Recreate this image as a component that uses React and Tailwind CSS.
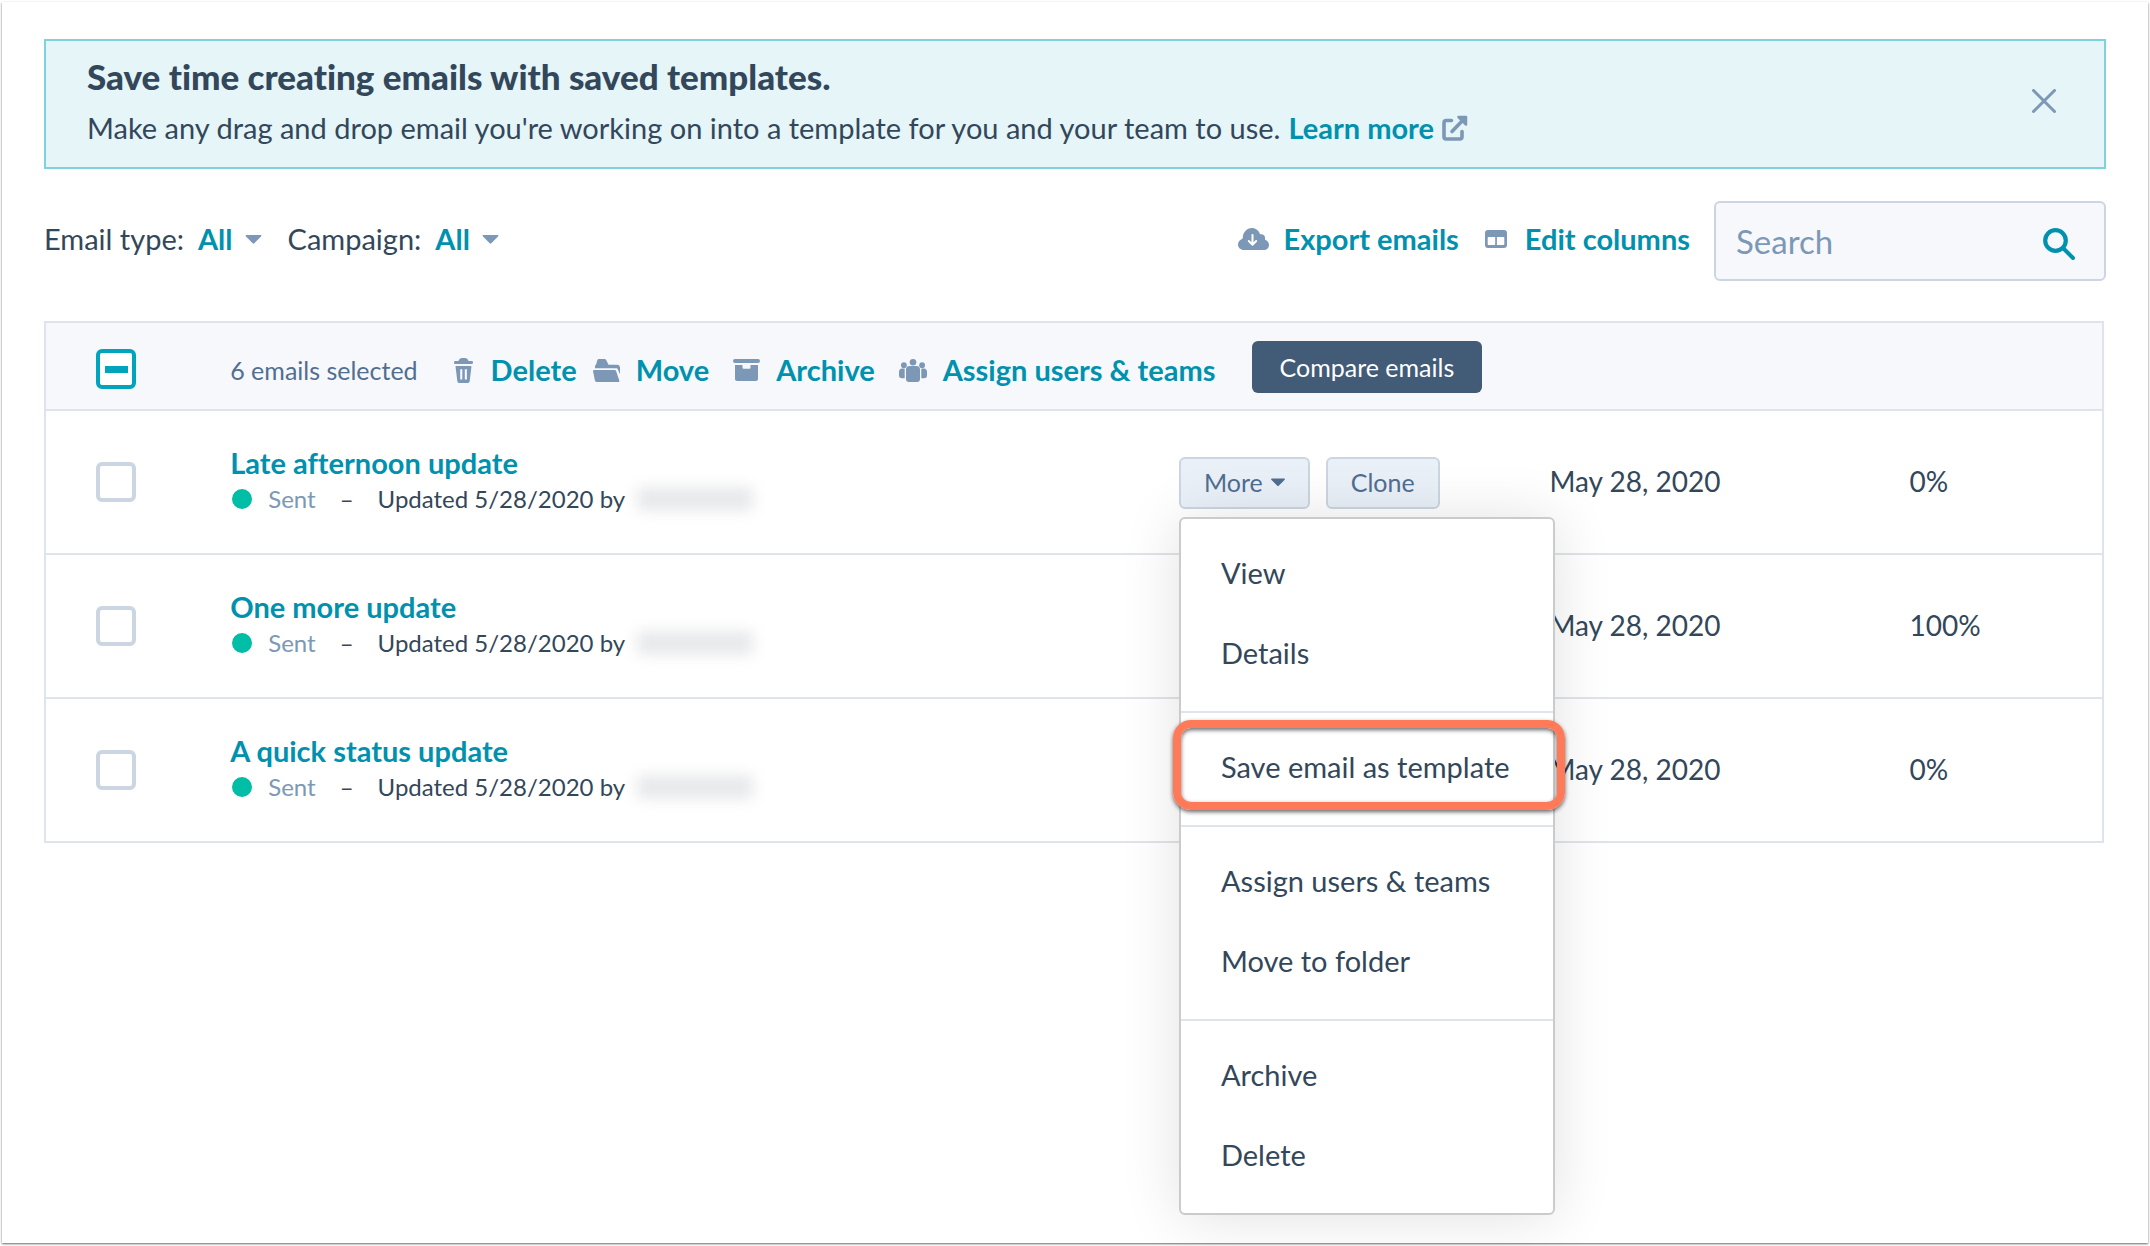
import React, { useEffect, useRef } from "react";

function Caret({ className = "w-[17px]" }) {
  return (
    <svg viewBox="0 0 18 10" className={`h-[9px] ${className}`} fill="currentColor" aria-hidden="true">
      <path d="M1 0h16c.8 0 1.100.8.6 1.400L9.900 9.300c-.5.6-1.300.6-1.800 0L.4 1.400C-.1.8.2 0 1 0z" />
    </svg>
  );
}

function ExternalIcon() {
  return (
    <svg viewBox="0 0 26 26" className="h-[26px] w-[26px] text-[#7c98b6]" fill="none" stroke="currentColor" strokeWidth="3.600" strokeLinecap="round" strokeLinejoin="round" aria-hidden="true">
      <path d="M9.500 5.500H4.200C2.700 5.500 2 6.200 2 7.700v14.100C2 23.300 2.700 24 4.200 24h13.600c1.500 0 2.200-.7 2.200-2.200V16.500" />
      <path d="M10 16.500 22.500 3.500" />
      <path d="M16.500 2h7.500v7.500z" fill="currentColor" strokeWidth="2.500" />
    </svg>
  );
}

function CloseIcon() {
  return (
    <svg viewBox="0 0 24 24" className="h-6 w-6" fill="none" stroke="currentColor" strokeWidth="3" strokeLinecap="round" aria-hidden="true">
      <path d="M1.500 1.500l21 21M22.500 1.500l-21 21" />
    </svg>
  );
}

function CloudIcon() {
  return (
    <svg viewBox="0 0 31 22" className="h-[22px] w-[31px]" aria-hidden="true">
      <path fill="currentColor" d="M6 22C2.600 22 0 19.600 0 16.500c0-2.500 1.500-4.500 4-5.500.2-.1.700-.4.700-.8C4.800 4.300 8.800 0 13.800 0c3.800 0 7 2.500 8.200 5.900.1.300.6.500 1 .4 2.200-.2 4.100 1.400 4.100 3.700 0 .4 0 .9-.1 1.300 0 .4.300.7.600.8C29.600 12.900 31 14.700 31 16.900c0 2.900-2.300 5.100-5.200 5.100z" />
      <path fill="none" stroke="#fff" strokeWidth="2" strokeLinecap="round" strokeLinejoin="round" d="M14.500 7v9.500M10.800 13l3.700 3.700 3.700-3.700" />
    </svg>
  );
}

function ColumnsIcon() {
  return (
    <svg viewBox="0 0 22 18" className="h-[18px] w-[22px]" fill="currentColor" fillRule="evenodd" aria-hidden="true">
      <path d="M3 0h16a3 3 0 0 1 3 3v12a3 3 0 0 1-3 3H3a3 3 0 0 1-3-3V3a3 3 0 0 1 3-3zM3.500 7c-.5 0-.8.3-.8.800v6.500c0 .5.3.8.8.8h5.900c.5 0 .8-.3.800-.8V7zM11.900 7v8.100h6.600c.5 0 .8-.3.8-.8V7.800c0-.5-.3-.8-.8-.8z" />
    </svg>
  );
}

function SearchIcon() {
  return (
    <svg viewBox="0 0 32 32" className="h-8 w-8" fill="none" stroke="currentColor" aria-hidden="true">
      <circle cx="12.500" cy="12.500" r="10.300" strokeWidth="4.200" />
      <path d="M20.500 20.500 30 30" strokeWidth="4" strokeLinecap="round" />
    </svg>
  );
}

function TrashIcon() {
  return (
    <svg viewBox="0 0 19 25" className="h-[25px] w-[19px]" fill="currentColor" fillRule="evenodd" aria-hidden="true">
      <path d="M1.200 3h3.300C5 1 6.500 0 8 0h3c1.500 0 3 1 3.500 3h3.300C18.600 3 19 3.700 19 4.500S18.600 6 17.800 6H1.200C.4 6 0 5.300 0 4.500S.4 3 1.200 3z" />
      <path d="M2.300 8h14.400c.6 0 .8.4.7.900l-1.700 14c-.2 1.300-1.100 2.100-2.400 2.100H5.700c-1.300 0-2.200-.8-2.400-2.100l-1.700-14C1.500 8.400 1.700 8 2.300 8zM6.200 11.300v10.200h2.100V11.300zM10.800 11.300v10.200h2.100V11.300z" />
    </svg>
  );
}

function FolderIcon() {
  return (
    <svg viewBox="0 0 27 23" className="h-[23px] w-[27px]" fill="currentColor" aria-hidden="true">
      <path d="M2 9.300V7.200c0-.7.400-1.200 1-1.500L4.300 1.300C4.600.5 5.200 0 6 0h5.500c.8 0 1.400.4 1.800 1.200l2.200 4.600H24c1.800 0 3 1.300 3 3v6.500l-2-4.600c-.4-.9-1-1.400-2-1.400z" />
      <path d="M1.200 11h20.300c.8 0 1.300.4 1.600 1.100l3.200 9.300c.3.900-.2 1.600-1.100 1.600H3.600c-.9 0-1.500-.5-1.700-1.400L.1 12.500C-.1 11.600.3 11 1.200 11z" />
    </svg>
  );
}

function ArchiveIcon() {
  return (
    <svg viewBox="0 0 27 22" className="h-[22px] w-[27px]" fill="currentColor" aria-hidden="true">
      <rect width="27" height="4" rx="2" />
      <path d="M2 6h7.500v2.400c0 .9.500 1.400 1.400 1.400h5.200c.9 0 1.400-.5 1.400-1.400V6H25v13.800c0 1.400-.8 2.200-2.200 2.200H4.200C2.800 22 2 21.200 2 19.800z" />
    </svg>
  );
}

function UsersIcon() {
  return (
    <svg viewBox="0 0 28 23" className="h-[23px] w-[28px]" fill="currentColor" aria-hidden="true">
      <circle cx="14" cy="3.300" r="3.300" />
      <path d="M10.500 7h7c2.200 0 3.500 1.500 3.500 3.500V20c0 2-1 3-3 3h-8c-2 0-3-1-3-3v-9.500C7 8.500 8.300 7 10.500 7z" />
      <circle cx="4.900" cy="6.200" r="2.900" />
      <circle cx="23.100" cy="6.200" r="2.900" />
      <path d="M2.500 9.500H5.700v9.700H3c-2 0-3-1-3-2.700V13c0-1.700.9-3.200 2.500-3.500zM25.500 9.500h-3.200v9.700H25c2 0 3-1 3-2.700V13c0-1.700-.9-3.200-2.500-3.500z" />
    </svg>
  );
}

function SelectAll() {
  const ref = useRef(null);
  useEffect(() => {
    ref.current.indeterminate = true;
  }, []);
  return (
    <input
      ref={ref}
      type="checkbox"
      aria-label="Select all emails"
      className="grid h-10 w-10 appearance-none place-items-center rounded-md border-4 border-[#00a4bd] bg-white before:h-[7px] before:w-[23px] before:bg-[#00a4bd] before:content-['']"
    />
  );
}

function ActionLink({ icon, children, className = "" }) {
  return (
    <button type="button" className={`flex items-center font-bold text-[#0091ae] ${className}`}>
      <span className="text-[#7c98b6]">{icon}</span>
      {children}
    </button>
  );
}

function Filter({ label }) {
  return (
    <div className="flex items-center gap-[14px]">
      <span>{label}</span>
      <button type="button" aria-label={`${label} All`} className="flex items-center gap-3 font-bold text-[#0091ae]">
        All
        <Caret className="w-[17px] text-[#7c98b6]" />
      </button>
    </div>
  );
}

function MenuItem({ children, highlighted = false }) {
  return (
    <li className="relative">
      <button type="button" role="menuitem" className="block h-20 w-full px-10 pb-1 text-left whitespace-nowrap">
        {children}
      </button>
      {highlighted && (
        <span className="pointer-events-none absolute -top-[9px] -right-3 -bottom-[1px] -left-2 rounded-[18px] border-8 border-[#ff7a59] shadow-[0_2px_4px_rgba(0,0,0,0.6),inset_0_2px_4px_rgba(0,0,0,0.6)]" />
      )}
    </li>
  );
}

function MoreMenu() {
  return (
    <div role="menu" className="absolute top-full left-0 z-10 mt-2 w-[376px] divide-y-2 divide-[#dfe3eb] rounded-md border-2 border-[#cbcbcb] bg-white text-[29px] text-[#33475b] shadow-[0_2px_60px_rgba(0,0,0,0.12)]">
      <ul className="py-4">
        <MenuItem>View</MenuItem>
        <MenuItem>Details</MenuItem>
      </ul>
      <ul className="py-4">
        <MenuItem highlighted>Save email as template</MenuItem>
      </ul>
      <ul className="py-4">
        <MenuItem>Assign users &amp; teams</MenuItem>
        <MenuItem>Move to folder</MenuItem>
      </ul>
      <ul className="py-4">
        <MenuItem>Archive</MenuItem>
        <MenuItem>Delete</MenuItem>
      </ul>
    </div>
  );
}

const emails = [
  { name: "Late afternoon update", date: "May 28, 2020", rate: "0%", open: true },
  { name: "One more update", date: "May 28, 2020", rate: "100%" },
  { name: "A quick status update", date: "May 28, 2020", rate: "0%" },
];

const smallButton = "flex h-[52px] items-center gap-2 rounded-md border-2 border-[#cbd6e2] bg-[#e9f0f8] px-[23px] pb-[2px] text-[25px] text-[#506e91]";

function EmailRow({ email }) {
  return (
    <tr className="h-36 border-t-2 border-[#dfe3eb]">
      <td className="pl-[50px]">
        <input type="checkbox" aria-label={`Select ${email.name}`} className="block h-10 w-10 appearance-none rounded-md border-4 border-[#cbd6e2] bg-white" />
      </td>
      <td className="pb-[2px] whitespace-nowrap">
        <a href="#email" className="block leading-9 font-bold text-[#0091ae]">{email.name}</a>
        <div className="flex items-center text-2xl leading-9">
          <span className="mr-4 ml-[2px] h-5 w-5 rounded-full bg-[#00bda5]" />
          <span className="text-[#7c98b6]">Sent</span>
          <span className="mx-6">–</span>
          <span>Updated 5/28/2020 by</span>
          <span className="ml-3 h-6 w-[116px] bg-[#e8e9eb] blur-[7px]" />
        </div>
      </td>
      <td className="pt-[2px]">
        {email.open && (
          <div className="relative flex w-fit gap-4">
            <button type="button" aria-haspopup="menu" aria-expanded="true" className={smallButton}>
              More
              <Caret className="w-[14px]" />
            </button>
            <button type="button" className={smallButton}>Clone</button>
            <MoreMenu />
          </div>
        )}
      </td>
      <td className="pb-[2px] text-[28px] whitespace-nowrap">{email.date}</td>
      <td className="pb-[2px] text-[28px]">{email.rate}</td>
    </tr>
  );
}

export default function App() {
  return (
    <div className="flex min-h-screen overflow-hidden bg-white px-[2px] pt-[2px] pb-[3px] font-['Lato',sans-serif] text-[29px] leading-9 text-[#33475b] [font-variant-ligatures:no-common-ligatures]">
      <main className="flex-1 bg-white px-[42px] pt-[37px] shadow-[0_1px_2px_rgba(0,0,0,0.6)]">
        <section className="flex h-[130px] items-center justify-between border-2 border-[#7fd1de] bg-[#e5f5f8] pr-12 pl-[41px]">
          <div className="pb-1">
            <h1 className="text-[35px] leading-[52px] font-black">Save time creating emails with saved templates.</h1>
            <p className="flex items-center leading-[52px]">
              Make any drag and drop email you're working on into a template for you and your team to use.
              <a href="#learn" className="ml-2 flex items-center gap-2 font-bold text-[#0091ae]">
                Learn more
                <ExternalIcon />
              </a>
            </p>
          </div>
          <button type="button" aria-label="Dismiss" className="pb-[6px] text-[#7c98b6]">
            <CloseIcon />
          </button>
        </section>

        <div className="mt-8 flex h-20 items-center">
          <div className="flex gap-[26px] pb-1">
            <Filter label="Email type:" />
            <Filter label="Campaign:" />
          </div>
          <div className="ml-auto flex items-center">
            <ActionLink icon={<CloudIcon />} className="mr-[26px] gap-[14px] pb-1">Export emails</ActionLink>
            <ActionLink icon={<ColumnsIcon />} className="mr-6 gap-[18px] pb-1">Edit columns</ActionLink>
            <div className="flex h-20 w-[392px] items-center rounded-md border-2 border-[#cbd6e2] bg-[#f6f8fb] pr-[29px] pl-5">
              <input type="search" aria-label="Search" placeholder="Search" className="min-w-0 flex-1 bg-transparent text-[33px] outline-none placeholder:text-[#7c98b6]" />
              <button type="button" aria-label="Submit search" className="pt-[6px] text-[#0091ae]">
                <SearchIcon />
              </button>
            </div>
          </div>
        </div>

        <div className="mt-10 pr-[2px]">
          <table className="w-full table-fixed border-collapse border-2 border-[#dfe3eb] text-left">
            <colgroup>
              <col className="w-[9%]" />
              <col className="w-[46.1%]" />
              <col className="w-[18%]" />
              <col className="w-[17.5%]" />
              <col className="w-[9.4%]" />
            </colgroup>
            <thead className="bg-[#f6f8fb]">
              <tr className="h-[88px]">
                <th className="pt-[6px] pl-[50px]">
                  <SelectAll />
                </th>
                <th colSpan={4} className="pt-[2px] font-normal">
                  <div className="flex items-center whitespace-nowrap">
                    <div className="flex items-center pt-[6px]">
                      <span className="mr-9 text-[25px] text-[#516f90]">6 emails selected</span>
                      <ActionLink icon={<TrashIcon />} className="mr-4 gap-[18px]">Delete</ActionLink>
                      <ActionLink icon={<FolderIcon />} className="mr-6 gap-4">Move</ActionLink>
                      <ActionLink icon={<ArchiveIcon />} className="mr-6 gap-4">Archive</ActionLink>
                      <ActionLink icon={<UsersIcon />} className="mr-9 gap-4">Assign users &amp; teams</ActionLink>
                    </div>
                    <button type="button" className="h-[52px] rounded-md bg-[#425b76] px-7 text-[25px] text-white">Compare emails</button>
                  </div>
                </th>
              </tr>
            </thead>
            <tbody>
              {emails.map((email) => (
                <EmailRow key={email.name} email={email} />
              ))}
            </tbody>
          </table>
        </div>
      </main>
    </div>
  );
}
